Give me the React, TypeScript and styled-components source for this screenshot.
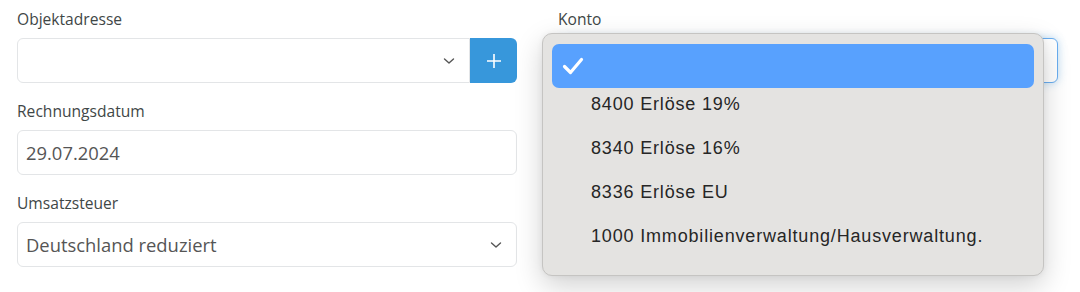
import React from "react";
import styled, { createGlobalStyle } from "styled-components";

const GlobalStyle = createGlobalStyle`
    html, body {
        margin: 0;
        padding: 0;
        background: #ffffff;
    }
    body {
        font-family: "Open Sans", "Liberation Sans", sans-serif;
    }
`;

const kontoOptions = [
    "8400 Erlöse 19%",
    "8340 Erlöse 16%",
    "8336 Erlöse EU",
    "1000 Immobilienverwaltung/Hausverwaltung.",
];

function Chevron() {
    return (
        <ChevronIcon width="12" height="8" viewBox="0 0 12 8">
            <path d="M1.5 2 L6 6 L10.5 2" fill="none" stroke="#555" strokeWidth="1.4" strokeLinecap="round" strokeLinejoin="round" />
        </ChevronIcon>
    );
}

function App() {
    return (
        <>
            <GlobalStyle />
            <Page>
                <Column>
                    <Group>
                        <Label>Objektadresse</Label>
                        <InputRow>
                            <Field $joined>
                                <Value />
                                <Chevron />
                            </Field>
                            <AddButton type="button">
                                <svg width="16" height="16" viewBox="0 0 16 16">
                                    <path d="M8 1 V15 M1 8 H15" stroke="#fff" strokeWidth="1.6" />
                                </svg>
                            </AddButton>
                        </InputRow>
                    </Group>

                    <Group>
                        <Label>Rechnungsdatum</Label>
                        <Field>
                            <Value>29.07.2024</Value>
                        </Field>
                    </Group>

                    <Group>
                        <Label>Umsatzsteuer</Label>
                        <Field>
                            <Value>Deutschland reduziert</Value>
                            <Chevron />
                        </Field>
                    </Group>
                </Column>

                <Column>
                    <Group>
                        <Label>Konto</Label>
                        <SelectWrap>
                            <Field $focused>
                                <Value />
                            </Field>
                            <Menu>
                                <Option $selected>
                                    <CheckIcon width="24" height="20" viewBox="0 0 24 20">
                                        <path d="M3.5 10.5 L9.5 16.5 L20.5 3.5" fill="none" stroke="#fff" strokeWidth="3.2" strokeLinecap="round" strokeLinejoin="round" />
                                    </CheckIcon>
                                </Option>
                                {
                                    kontoOptions.map((opt) => (
                                        <Option key={opt}>{opt}</Option>
                                    ))
                                }
                            </Menu>
                        </SelectWrap>
                    </Group>
                </Column>
            </Page>
        </>
    );
}

const Page = styled.div`
    display: grid;
    grid-template-columns: 500px 500px;
    column-gap: 41px;
    padding: 8px 0 0 17px;
    height: 292px;
    box-sizing: border-box;
`;

const Column = styled.div`
    display: flex;
    flex-direction: column;
    gap: 17px;
`;

const Group = styled.div`
    display: flex;
    flex-direction: column;
`;

const Label = styled.label`
    font-size: 15.6px;
    line-height: 22px;
    color: #3f4747;
    margin-bottom: 8px;
`;

const InputRow = styled.div`
    display: flex;
`;

const Field = styled.div<{ $joined?: boolean; $focused?: boolean }>`
    flex: 1 0 auto;
    height: 45px;
    box-sizing: border-box;
    display: flex;
    align-items: center;
    justify-content: space-between;
    padding: 0 14px 0 8px;
    background: #fff;
    border: 1px solid ${(p) => (p.$focused ? "#6aaef0" : "#e3e5e7")};
    border-radius: ${(p) => (p.$joined ? "6px 0 0 6px" : "6px")};
    box-shadow: ${(p) => (p.$focused ? "0 0 8px rgba(102, 175, 233, 0.45)" : "none")};
`;

const Value = styled.span`
    font-size: 18.4px;
    color: #555;
`;

const ChevronIcon = styled.svg`
    display: block;
`;

const AddButton = styled.button`
    width: 47px;
    height: 45px;
    border: none;
    padding: 0;
    background: #3797db;
    border-radius: 0 6px 6px 0;
    display: flex;
    align-items: center;
    justify-content: center;
`;

const SelectWrap = styled.div`
    position: relative;
`;

const Menu = styled.div`
    position: absolute;
    left: -16px;
    top: -5px;
    width: 502px;
    box-sizing: border-box;
    padding: 10px 9px 17px;
    background: #e4e3e1;
    border: 1px solid #c5c4c2;
    border-radius: 10px;
    box-shadow: 0 10px 28px rgba(0, 0, 0, 0.18), 0 0 6px rgba(0, 0, 0, 0.06);
    display: flex;
    flex-direction: column;
`;

const Option = styled.div<{ $selected?: boolean }>`
    height: 44px;
    display: flex;
    align-items: center;
    padding-left: 39px;
    margin-bottom: ${(p) => (p.$selected ? "-6px" : "0")};
    border-radius: 7px;
    background: ${(p) => (p.$selected ? "#58a1fe" : "transparent")};
    font-family: "Liberation Sans", Arial, sans-serif;
    font-size: 18px;
    letter-spacing: 0.83px;
    color: #262626;
`;

const CheckIcon = styled.svg`
    margin-left: -30px;
    display: block;
`;

export default App;
